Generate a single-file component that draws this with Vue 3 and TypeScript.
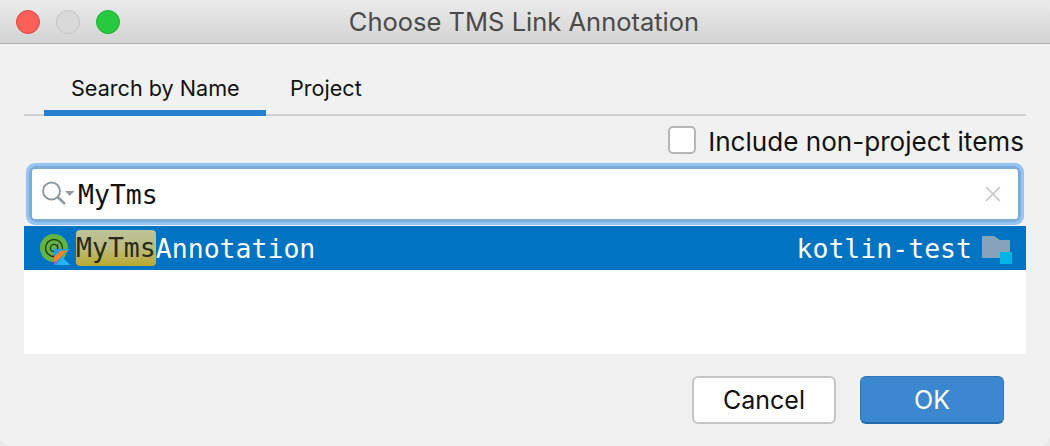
<script setup lang="ts">
const title = 'Choose TMS Link Annotation'
</script>

<template>
  <div class="win">
    <header class="titlebar">
      <div class="lights">
        <span class="light red"></span>
        <span class="light grey"></span>
        <span class="light green"></span>
      </div>
      <div class="title">{{ title }}</div>
    </header>
    <main class="body">
      <nav class="tabs">
        <div class="tab active">Search by Name</div>
        <div class="tab">Project</div>
      </nav>
      <div class="optrow">
        <span class="check"></span>
        <span class="optlabel">Include non-project items</span>
      </div>
      <div class="search">
        <svg class="sicon" width="36" height="28" viewBox="0 0 36 28">
          <circle cx="10.500" cy="11" r="8.500" fill="none" stroke="#8f9ba3" stroke-width="2" />
          <path d="M16.500 17l7.500 7" stroke="#8f9ba3" stroke-width="2.600" fill="none" />
          <path d="M24 11h9.500l-4.750 5z" fill="#8f9ba3" />
        </svg>
        <span class="query">MyTms</span>
        <svg class="clear" width="16" height="16" viewBox="0 0 16 16">
          <path d="M1 1l14 14M15 1L1 15" stroke="#c4c4c4" stroke-width="1.600" fill="none" />
        </svg>
      </div>
      <div class="results">
        <div class="row">
          <svg class="anno" width="32" height="32" viewBox="0 0 32 32">
            <circle cx="14" cy="14" r="14" fill="#62b543" />
            <circle cx="14" cy="14" r="8.500" fill="none" stroke="#23391b" stroke-width="1.300" />
            <circle cx="14" cy="14" r="3.600" fill="none" stroke="#23391b" stroke-width="1.300" />
            <path d="M17.600 10.500v6c0 2 2 2 3 1" fill="none" stroke="#23391b" stroke-width="1.200" />
            <path d="M14 15h16l-8 8 8 8H14z" fill="#1e9bf0" />
            <path d="M28 16L14 30v-7l6-6z" fill="#f5861f" />
            <path d="M14 31v-5l3 2.500z" fill="#d04fc0" />
            <path d="M17 31l5-8 8 8z" fill="#27b4f5" />
          </svg>
          <span class="mono name"><mark class="hit">MyTms</mark>Annotation</span>
          <span class="mono module">kotlin-test</span>
          <svg class="folder" width="30" height="28" viewBox="0 0 30 28">
            <path d="M0 0h12l6 4h10v18H0z" fill="#87a3ba" />
            <rect x="18" y="16" width="12" height="12" fill="#00b4e6" />
          </svg>
        </div>
        <div class="rest"></div>
      </div>
      <footer class="buttons">
        <button class="btn cancel" type="button">Cancel</button>
        <button class="btn ok" type="button">OK</button>
      </footer>
    </main>
  </div>
</template>

<style>
html, body { margin: 0; background: #e9e9e9; }
</style>

<style scoped>
.win {
  width: 1050px;
  height: 446px;
  overflow: hidden;
  display: flex;
  flex-direction: column;
  border-radius: 10px;
  background: #f1f1f1;
  font-family: Inter, "Liberation Sans", sans-serif;
  box-sizing: border-box;
}
.titlebar {
  flex: 0 0 44px;
  box-sizing: border-box;
  position: relative;
  display: flex;
  align-items: center;
  justify-content: center;
  background: linear-gradient(#ebebeb, #d3d3d3);
  border-bottom: 1px solid #b1b1b1;
  padding-right: 2px;
}
.lights {
  position: absolute;
  left: 16px;
  top: 10px;
  display: flex;
  gap: 16px;
}
.light {
  width: 24px;
  height: 24px;
  border-radius: 50%;
  box-sizing: border-box;
}
.red { background: #fc5f57; border: 1px solid #e2463f; }
.grey { background: #d9d9d9; border: 1px solid #c3c3c3; }
.green { background: #28c83f; border: 1px solid #1fb032; }
.title {
  font-size: 25.500px;
  color: #4a4a4a;
  white-space: nowrap;
}
.body {
  flex: 1;
  display: flex;
  flex-direction: column;
  padding: 0 24px;
}
.tabs {
  height: 72px;
  box-sizing: border-box;
  display: flex;
  align-items: stretch;
  border-bottom: 2px solid #d1d1d1;
  padding-left: 20px;
}
.tab {
  padding: 29px 27px 0;
  font-size: 21.600px;
  line-height: 30px;
  color: #111;
  height: 72px;
  box-sizing: border-box;
  white-space: nowrap;
}
.tab.active {
  width: 222px;
  border-bottom: 6px solid #2680cf;
}
.tab + .tab { padding-left: 24px; }
.optrow {
  height: 50px;
  display: flex;
  align-items: center;
  justify-content: flex-end;
  padding-right: 2px;
}
.check {
  width: 28px;
  height: 28px;
  box-sizing: border-box;
  background: #fff;
  border: 2px solid #b6b6b6;
  border-radius: 5px;
  margin-right: 12px;
  margin-bottom: 2px;
}
.optlabel {
  font-size: 26.100px;
  color: #111;
  white-space: nowrap;
}
.search {
  height: 56px;
  box-sizing: border-box;
  margin: 0 5px;
  border: 3px solid #7cacdc;
  outline: 3px solid #93c4f4;
  border-radius: 6px;
  background: #fff;
  display: flex;
  align-items: center;
  padding-left: 9px;
  padding-right: 17px;
}
.sicon { flex: none; }
.query {
  font-family: "DejaVu Sans Mono", "Liberation Mono", monospace;
  font-size: 26.500px;
  color: #111;
  margin-left: 1px;
  flex: 1;
}
.results {
  margin-top: 4px;
  display: flex;
  flex-direction: column;
  background: #fff;
}
.row {
  height: 44px;
  background: #0073c2;
  display: flex;
  align-items: center;
  color: #fff;
  padding-left: 16px;
  padding-right: 14px;
}
.anno { flex: none; margin-top: 4px; margin-right: 4px; }
.mono {
  font-family: "DejaVu Sans Mono", "Liberation Mono", monospace;
  font-size: 26.500px;
}
.name { flex: 1; display: flex; align-items: center; }
.hit {
  background: linear-gradient(#bcc39c, #bcbb7c 50%, #b9a92f);
  color: #2a2a1c;
  border-radius: 4px;
  height: 36px;
  line-height: 36px;
  display: inline-block;
}
.folder { flex: none; margin-left: 10px; margin-top: 4px; }
.rest { height: 84px; background: #fff; }
.buttons {
  flex: 1;
  display: flex;
  justify-content: flex-end;
  gap: 24px;
  padding-top: 22px;
  padding-right: 22px;
  align-items: flex-start;
}
.btn {
  width: 144px;
  height: 48px;
  box-sizing: border-box;
  border-radius: 6px;
  font-family: Inter, "Liberation Sans", sans-serif;
  font-size: 25px;
  padding: 0;
}
.cancel { background: #fff; border: 2px solid #c6c6c6; color: #111; }
.ok { background: #3b88d0; border: 1px solid #2f75b8; border-bottom: 2px solid #2369ae; color: #fff; }
</style>
